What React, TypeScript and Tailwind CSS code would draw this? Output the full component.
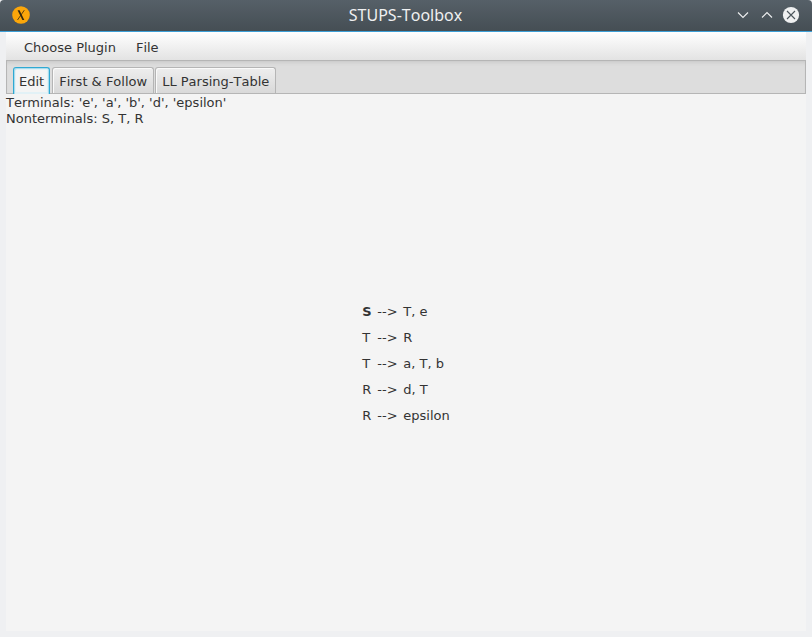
import { useState } from "react";

const terminals = ["e", "a", "b", "d", "epsilon"];
const nonterminals = ["S", "T", "R"];
const productions = [
  { left: "S", right: "T, e", start: true },
  { left: "T", right: "R", start: false },
  { left: "T", right: "a, T, b", start: false },
  { left: "R", right: "d, T", start: false },
  { left: "R", right: "epsilon", start: false },
];
const tabs = ["Edit", "First & Follow", "LL Parsing-Table"];

function TitleBar() {
  return (
    <header className="grid h-8 shrink-0 grid-cols-[1fr_auto_1fr] items-center rounded-t-sm border-b border-[#3d9fd6] bg-linear-to-b from-[#566068] to-[#454e54] pr-[13px] pb-px pl-3">
      <svg width="18" height="18" viewBox="0 0 18 18" aria-hidden="true">
        <circle cx="9" cy="9" r="8.8" fill="#fba60a" />
        <path d="M5.6 4.2 L7.6 4.2 L12.3 14 L10.4 14 Z" fill="#33280f" />
        <path d="M12.3 4.2 L5.5 14" stroke="#33280f" strokeWidth="0.8" fill="none" />
      </svg>
      <h1 className="font-['Noto_Sans',sans-serif] text-base leading-5 text-[#eff0f1]">STUPS-Toolbox</h1>
      <div className="flex justify-end gap-2">
        <button aria-label="Minimize" className="size-4">
          <svg width="16" height="16" viewBox="0 0 16 16" fill="none" stroke="#eff0f1" strokeWidth="1.1">
            <path d="M3 5.5 L8 10.5 L13 5.5" />
          </svg>
        </button>
        <button aria-label="Maximize" className="size-4">
          <svg width="16" height="16" viewBox="0 0 16 16" fill="none" stroke="#eff0f1" strokeWidth="1.1">
            <path d="M3 10.5 L8 5.5 L13 10.5" />
          </svg>
        </button>
        <button aria-label="Close" className="size-4">
          <svg width="16" height="16" viewBox="0 0 16 16" className="overflow-visible">
            <circle cx="8" cy="8" r="8.1" fill="#eff0f1" />
            <path d="M4 4 L12 12 M12 4 L4 12" stroke="#4b555c" strokeWidth="1.1" />
          </svg>
        </button>
      </div>
    </header>
  );
}

function EditPanel() {
  return (
    <div className="grid flex-1 bg-[#f4f4f4] pt-px">
      <div className="col-start-1 row-start-1 leading-4">
        <p>Terminals: {terminals.map((t) => `'${t}'`).join(", ")}</p>
        <p>Nonterminals: {nonterminals.join(", ")}</p>
      </div>
      <table className="col-start-1 row-start-1 place-self-center">
        <tbody>
          {productions.map((p, i) => (
            <tr key={i} className="h-[26px]">
              <th scope="row" className={p.start ? "w-[15px] p-0 pt-0.5 text-left font-bold" : "w-[15px] p-0 pt-0.5 text-left font-normal"}>
                {p.left}
              </th>
              <td className="w-[26px] p-0 pt-0.5">--&gt;</td>
              <td className="p-0 pt-0.5">{p.right}</td>
            </tr>
          ))}
        </tbody>
      </table>
    </div>
  );
}

export default function App() {
  const [active, setActive] = useState(0);
  return (
    <div className="flex min-h-screen flex-col bg-[#eff0f2] font-['DejaVu_Sans',sans-serif] text-[13px] text-[#333333] [font-kerning:none]">
      <TitleBar />
      <main className="mx-1.5 mb-1.5 flex flex-1 flex-col">
        <nav className="flex h-[29px] items-center gap-5 border-b border-[#b5b5b5] bg-linear-to-b from-white to-[#e3e3e3] px-[18px] pt-[3px]">
          <button>Choose Plugin</button>
          <button>File</button>
        </nav>
        <div
          role="tablist"
          className="flex h-[33px] items-end gap-px border-x border-b border-[#b5b5b5] bg-[#dddddd] px-[5px] shadow-[inset_0_4px_4px_-3px_#c4c4c4]"
        >
          {tabs.map((name, i) => (
            <button
              key={name}
              role="tab"
              aria-selected={i === active}
              onClick={() => setActive(i)}
              className={
                i === active
                  ? "mx-px -mb-px h-[27px] rounded-t-[3px] border border-b-0 border-[#2fa9d3] bg-[#f4f4f4] px-[5px] pt-px shadow-[inset_1px_1px_0_#a9dbec,inset_-1px_0_0_#a9dbec,inset_0_0_0_2px_#e2f1f6]"
                  : "h-[26px] rounded-t-[3px] border border-b-0 border-[#b5b5b5] bg-linear-to-b from-[#eeeeee] to-[#d9d9d9] px-1.5 pt-0.5 shadow-[inset_1px_1px_0_#fafafa]"
              }
            >
              {name}
            </button>
          ))}
        </div>
        <EditPanel />
      </main>
    </div>
  );
}
